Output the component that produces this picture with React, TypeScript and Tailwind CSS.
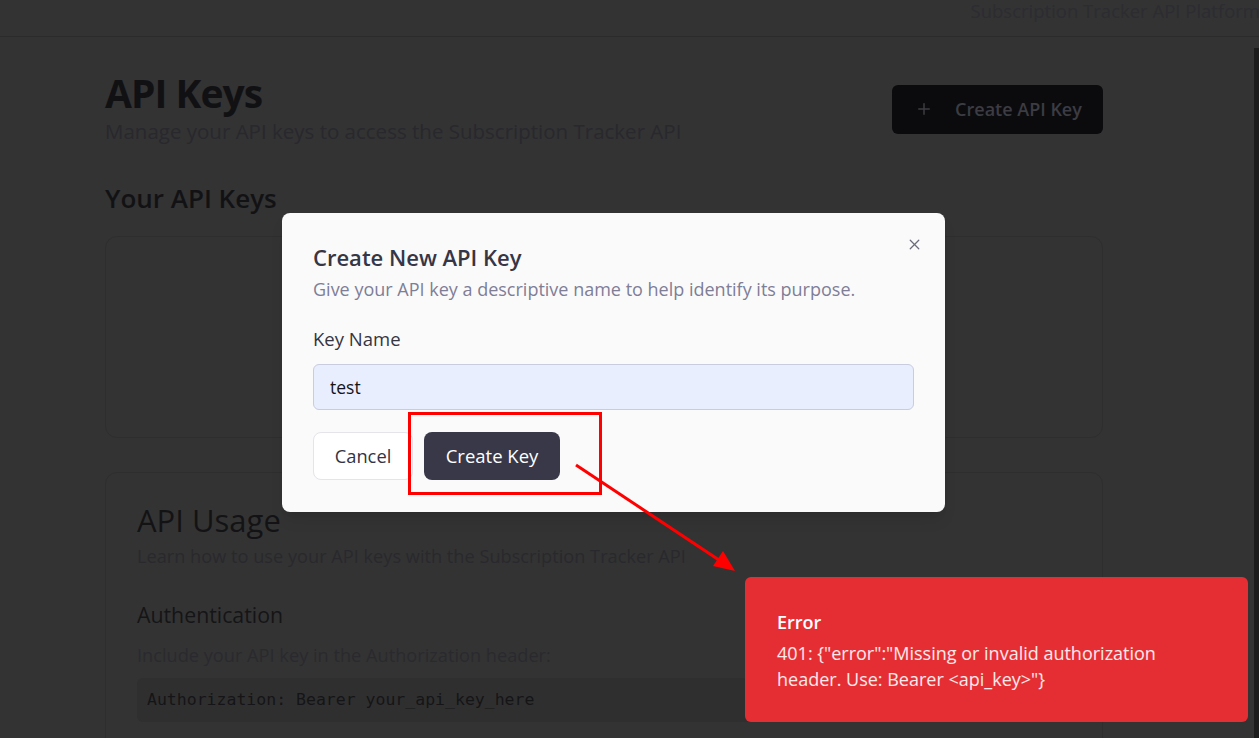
import { Plus, X } from "lucide-react";

const font = { fontFamily: '"Open Sans", "Noto Sans", sans-serif' };

function Backdrop() {
  return (
    <div className="min-h-[738px] w-full bg-[#333333]">
      <header className="flex h-[37px] items-start justify-end overflow-hidden border-b border-[#2b2b2b]">
        <span className="-mr-[1px] whitespace-nowrap text-[18.5px] leading-[21px] text-[#2c2c31]">
          Subscription Tracker API Platform
        </span>
      </header>

      <main className="ml-[105px] w-[998px] pt-[36px]">
        <div className="flex items-center justify-between">
          <div>
            <h1 className="text-[39px] font-bold leading-[40px] tracking-tight text-[#111113]">API Keys</h1>
            <p className="mt-[4px] text-[20.5px] leading-[28px] text-[#28282d]">
              Manage your API keys to access the Subscription Tracker API
            </p>
          </div>
          <button className="flex h-[49px] w-[211px] items-center justify-center gap-[22px] rounded-md bg-[#0b0b0e] pl-[2px] text-[18px] font-semibold text-[#3c3c42]">
            <Plus size={18} strokeWidth={2} />
            Create API Key
          </button>
        </div>

        <h2 className="mt-[37px] text-[26px] font-semibold leading-[32px] text-[#121214]">Your API Keys</h2>
        <div className="mt-[22px] h-[202px] rounded-xl border border-[#2e2e2e]" />

        <section className="mt-[34px] h-[300px] rounded-xl border border-[#2e2e2e] px-[31px] pt-[29px]">
          <h3 className="text-[31px] font-medium leading-[36px] text-[#131315]">API Usage</h3>
          <p className="mt-[6px] text-[18.2px] leading-[24px] text-[#29292d]">
            Learn how to use your API keys with the Subscription Tracker API
          </p>
          <h4 className="mt-[33px] text-[21.3px] font-medium leading-[28px] text-[#151517]">Authentication</h4>
          <p className="mt-[14px] text-[18.2px] leading-[24px] text-[#2a2a2e]">
            Include your API key in the Authorization header:
          </p>
          <div className="mt-[11px] flex h-[44px] items-center rounded-md bg-[#2f2f2f] px-[10px]">
            <code
              className="text-[16.5px] text-[#151517]"
              style={{ fontFamily: '"DejaVu Sans Mono", "Liberation Mono", monospace' }}
            >
              Authorization: Bearer your_api_key_here
            </code>
          </div>
        </section>
      </main>
    </div>
  );
}

function Modal() {
  return (
    <div className="absolute left-[282px] top-[213px] w-[663px] rounded-lg bg-[#fafafa] px-[31px] pb-[32px] pt-[30px] shadow-lg">
      <button className="absolute right-[22px] top-[23px] text-[#6b6b7b]">
        <X size={17} strokeWidth={1.8} />
      </button>
      <h2 className="text-[22px] font-semibold leading-[28px] text-[#363646]">Create New API Key</h2>
      <p className="mt-[6px] text-[18px] leading-[24px] text-[#7e7e97]">
        Give your API key a descriptive name to help identify its purpose.
      </p>
      <label className="mt-[26px] block text-[18.5px] font-medium leading-[24px] text-[#343442]">Key Name</label>
      <div className="mt-[13px] flex h-[46px] items-center rounded-md border border-[#c9cbdf] bg-[#e8eefd] px-[16px] text-[17.5px] text-[#141418]">
        test
      </div>
      <div className="mt-[22px] flex gap-[11px]">
        <button className="h-[48px] w-[100px] rounded-lg border border-[#e4e4ea] bg-white text-[18.3px] text-[#333345]">
          Cancel
        </button>
        <button className="h-[48px] w-[136px] rounded-lg bg-[#383849] text-[18.5px] font-medium text-white">
          Create Key
        </button>
      </div>
    </div>
  );
}

function Annotation() {
  return (
    <svg className="pointer-events-none absolute left-0 top-0" width={1259} height={738}>
      <rect x={409.5} y={413.5} width={191} height={80} fill="none" stroke="#ff0000" strokeWidth={3} />
      <line x1={576} y1={465} x2={722} y2={562} stroke="#ff0000" strokeWidth={3} />
      <polygon points="735,571 713,566 723,551" fill="#ff0000" />
    </svg>
  );
}

function Toast() {
  return (
    <div className="absolute left-[745px] top-[577px] w-[503px] rounded-md bg-[#e52e34] px-[32px] pb-[30px] pt-[33px] text-white">
      <div className="text-[18px] font-semibold leading-[24px]">Error</div>
      <p className="mt-[6px] text-[18px] leading-[26px] text-white/90">
        401: {'{"error":"Missing or invalid authorization header. Use: Bearer <api_key>"}'}
      </p>
    </div>
  );
}

export default function App() {
  return (
    <div className="relative h-[738px] w-[1259px] overflow-hidden" style={font}>
      <Backdrop />
      <div className="absolute right-0 top-[48px] h-[690px] w-[5px] bg-[#1c1c1c]" />
      <Modal />
      <Annotation />
      <Toast />
    </div>
  );
}
